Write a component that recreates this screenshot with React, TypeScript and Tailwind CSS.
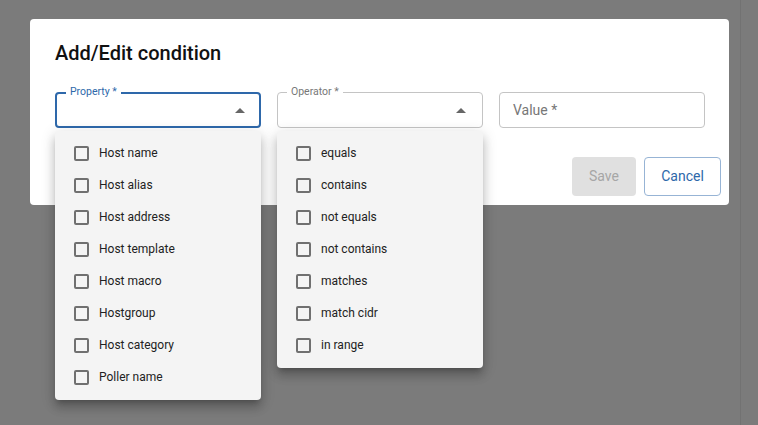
import React from "react";

const propertyItems = [
  "Host name",
  "Host alias",
  "Host address",
  "Host template",
  "Host macro",
  "Hostgroup",
  "Host category",
  "Poller name",
];

const operatorItems = [
  "equals",
  "contains",
  "not equals",
  "not contains",
  "matches",
  "match cidr",
  "in range",
];

function MenuItems({ items }: { items: string[] }) {
  return (
    <>
      {items.map((it) => (
        <div key={it} className="flex h-[32px] items-center pl-[19px]">
          <div className="h-[15px] w-[15px] rounded-[2px] border-2 border-[#707070]" />
          <span className="ml-[10px] text-[12px] text-[#222222]">{it}</span>
        </div>
      ))}
    </>
  );
}

const menuCls =
  "absolute w-[206px] rounded-[4px] bg-[#f4f4f4] pt-[6px] pb-[7px] shadow-[0px_5px_5px_-3px_rgba(0,0,0,0.2),0px_8px_10px_1px_rgba(0,0,0,0.14),0px_3px_14px_2px_rgba(0,0,0,0.12)] z-10";

export default function App() {
  return (
    <div
      className="flex h-[425px] w-full overflow-hidden bg-[#7b7b7b]"
      style={{ fontFamily: "Roboto, 'Liberation Sans', sans-serif" }}
    >
      <div className="w-[740px] shrink-0">
        <div className="ml-[30px] mt-[19px] h-[186px] w-[699px] rounded-[4px] bg-white pl-[25px] pr-[8px]">
          <div className="pt-[22px] text-[20px] font-medium leading-[24px] text-[#111111]">
            Add/Edit condition
          </div>
          <div className="mt-[27px] flex gap-[16px]">
            <div className="relative h-[36px] w-[206px] rounded-[4px] border-2 border-[#2e68aa]">
              <span className="absolute left-[9px] top-[-9px] bg-white px-[4px] text-[10.5px] leading-[14px] text-[#2e68aa]">
                Property *
              </span>
              <svg width="10" height="5" viewBox="0 0 10 5" className="absolute right-[14px] top-[14px]">
                <path d="M0 5 L5 0 L10 5 Z" fill="#666666" />
              </svg>
              <div className={`${menuCls} left-[-2px] top-[37px]`}>
                <MenuItems items={propertyItems} />
              </div>
            </div>
            <div className="relative h-[36px] w-[206px] rounded-[4px] border border-[#c4c4c4]">
              <span className="absolute left-[9px] top-[-8px] bg-white px-[4px] text-[10.5px] leading-[14px] text-[#777777]">
                Operator *
              </span>
              <svg width="10" height="5" viewBox="0 0 10 5" className="absolute right-[16px] top-[15px]">
                <path d="M0 5 L5 0 L10 5 Z" fill="#666666" />
              </svg>
              <div className={`${menuCls} left-[-1px] top-[38px]`}>
                <MenuItems items={operatorItems} />
              </div>
            </div>
            <div className="flex h-[36px] w-[206px] items-center rounded-[4px] border border-[#c4c4c4] pl-[13px] text-[14px] text-[#777777]">
              Value *
            </div>
          </div>
          <div className="mt-[29px] flex justify-end gap-[8px]">
            <div className="flex h-[39px] w-[64px] items-center justify-center rounded-[4px] bg-[#e0e0e0] text-[14px] text-[#a6a6a6]">
              Save
            </div>
            <div className="flex h-[39px] w-[77px] items-center justify-center rounded-[4px] border border-[#97b4d5] text-[14px] text-[#2e68aa]">
              Cancel
            </div>
          </div>
        </div>
      </div>
      <div className="w-[1px] shrink-0 bg-[#727272]" />
      <div className="flex-1" />
    </div>
  );
}
